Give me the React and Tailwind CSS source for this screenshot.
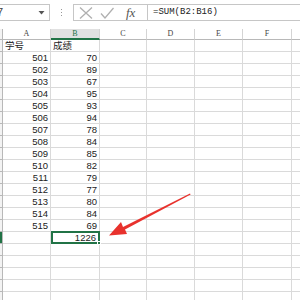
import React from 'react';

const rows = [
  ['学号', '成绩'],
  ['501', '70'], ['502', '89'], ['503', '67'], ['504', '95'], ['505', '93'],
  ['506', '94'], ['507', '78'], ['508', '84'], ['509', '85'], ['510', '82'],
  ['511', '79'], ['512', '77'], ['513', '80'], ['514', '84'], ['515', '69'],
  ['', '1226'],
];

const emptyRows = 5;

function Cell({ w, children, right, className = '' }) {
  return (
    <div className={`${w} h-full shrink-0 border-r border-b border-[#dadada] px-[2px] overflow-hidden whitespace-nowrap ${right ? 'text-right' : 'text-left'} ${className}`}>
      {children}
    </div>
  );
}

function Toolbar() {
  return (
    <div className="h-[29px] flex items-start pt-[4px] bg-white">
      <div className="w-[50px] h-[17px] border border-l-0 border-[#c6c6c6] flex items-center justify-between pr-[4px] text-[11px] text-[#444]" style={{ fontFamily: '"Liberation Sans", sans-serif' }}>
        <span className="-ml-[3px]">7</span>
        <svg width="7" height="5" viewBox="0 0 7 5"><path d="M0.5 1h6L3.5 4.5z" fill="#555" /></svg>
      </div>
      <div className="w-[23px] h-[17px] flex flex-col items-center justify-center gap-[2px]">
        <div className="w-[1px] h-[1px] bg-[#999]" />
        <div className="w-[1px] h-[1px] bg-[#999]" />
        <div className="w-[1px] h-[1px] bg-[#999]" />
      </div>
      <div className="w-[75px] h-[17px] border border-[#c6c6c6] flex items-center pl-[5px] gap-[7px]">
        <svg width="14" height="12" viewBox="0 0 14 12"><path d="M1 0.5l12 11M13 0.5l-12 11" stroke="#b0b0b0" strokeWidth="1.3" fill="none" /></svg>
        <svg width="14" height="12" viewBox="0 0 14 12"><path d="M1 6.5l4 4.5L13.5 1" stroke="#b0b0b0" strokeWidth="1.3" fill="none" /></svg>
        <span className="ml-[5px] italic text-[13px] leading-none text-[#555]" style={{ fontFamily: '"Liberation Serif", serif' }}>fx</span>
      </div>
      <div className="flex-1 h-[17px] border border-l-0 border-r-0 border-[#c6c6c6] flex items-center pl-[5px] text-[9px] text-[#222]" style={{ fontFamily: '"Liberation Mono", monospace' }}>
        =SUM(B2:B16)
      </div>
    </div>
  );
}

const cols = ['w-[48px]', 'w-[49px]', 'w-[47px]', 'w-[48px]', 'w-[48px]', 'w-[49px]', 'w-[20px]'];
const letters = ['A', 'B', 'C', 'D', 'E', 'F', ''];

export default function App() {
  return (
    <div className="w-[300px] h-[300px] overflow-hidden bg-white relative" style={{ fontFamily: '"Liberation Sans", "Noto Sans CJK SC", sans-serif' }}>
      <Toolbar />
      <div className="flex h-[11px] text-[8px] leading-[10px] text-[#444]" style={{ fontFamily: '"Liberation Serif", serif' }}>
        <div className="w-[3px] h-full shrink-0 border-r border-b border-[#b8b8b8] bg-[#f3f3f3]" />
        {letters.map((l, i) => (
          <div key={i} className={`${cols[i]} h-full shrink-0 border-r border-[#d4d4d4] text-center ${i === 1 ? 'bg-[#e1e1e1] text-[#217346] border-b-2 border-b-[#217346]' : 'bg-white border-b border-b-[#b8b8b8]'}`}>
            {l}
          </div>
        ))}
      </div>
      {rows.map((r, idx) => {
        const last = idx === rows.length - 1;
        return (
          <div key={idx} className="flex h-[12px] text-[9.5px] leading-[11px] text-[#222]">
            <div className={`w-[3px] h-full shrink-0 border-r border-b border-[#b8b8b8] ${last ? 'bg-[#217346]' : 'bg-[#f3f3f3]'}`} />
            <Cell w={cols[0]} right={idx > 0}>{r[0]}</Cell>
            {last ? (
              <div className={`${cols[1]} shrink-0 relative border-2 border-[#217346] -mt-[1px] h-[13px] text-right pr-[2px] leading-[10px]`}>
                {r[1]}
                <div className="absolute -right-[3px] -bottom-[3px] w-[4px] h-[4px] bg-[#217346] border border-white" />
              </div>
            ) : (
              <Cell w={cols[1]} right={idx > 0}>{r[1]}</Cell>
            )}
            {cols.slice(2).map((c, i) => <Cell key={i} w={c} />)}
          </div>
        );
      })}
      {Array.from({ length: emptyRows }).map((_, idx) => (
        <div key={'e' + idx} className="flex h-[12px]">
          <div className="w-[3px] h-full shrink-0 border-r border-b border-[#b8b8b8] bg-[#f3f3f3]" />
          {cols.map((c, i) => <Cell key={i} w={c} />)}
        </div>
      ))}
      <svg className="absolute left-0 top-0 pointer-events-none" width="300" height="300" viewBox="0 0 300 300">
        <path d="M190 193.5 L123 227 L121 222 L109 235.5 L127 234 L125 229.5 L190.6 194.6 Z" fill="#e8322d" />
      </svg>
    </div>
  );
}
